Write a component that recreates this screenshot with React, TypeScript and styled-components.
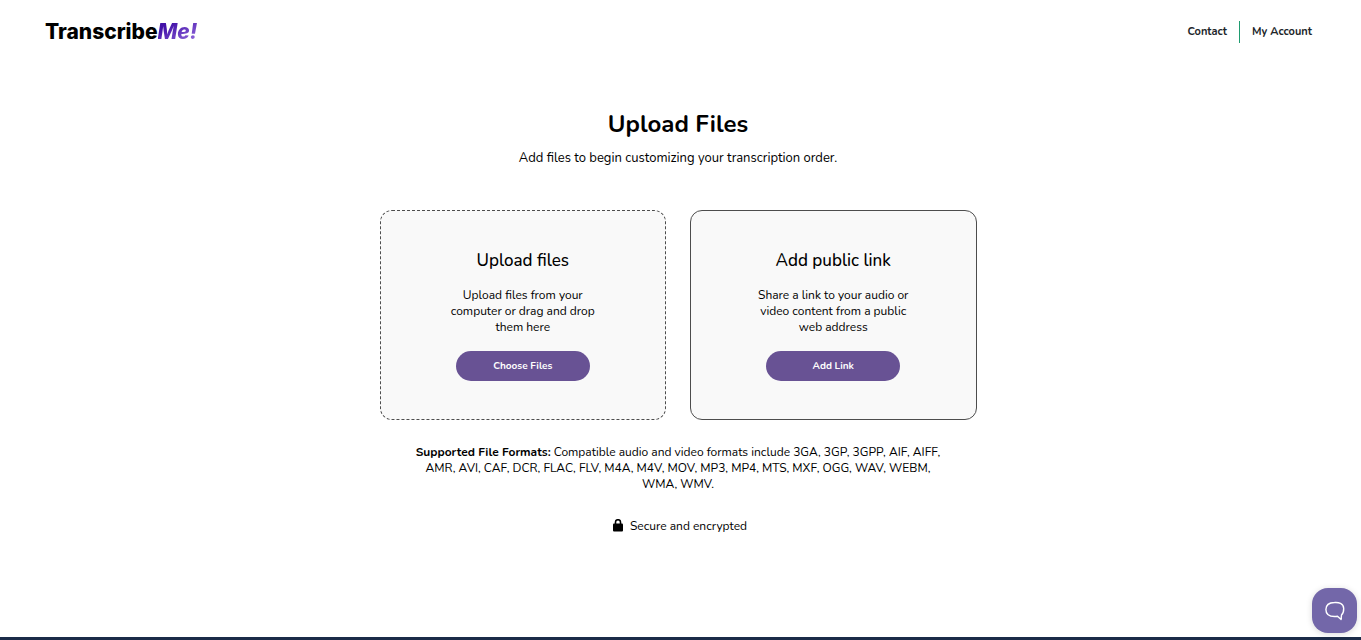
import React from 'react';
import styled, { createGlobalStyle } from 'styled-components';

const GlobalStyle = createGlobalStyle`
  *, *::before, *::after { box-sizing: border-box; }
  body {
    margin: 0;
    background: #fff;
    color: #000;
    font-family: Nunito, 'Noto Sans', sans-serif;
    font-size: 12px;
    line-height: 16px;
  }
  h1, h2, p { margin: 0; }
`;

const Page = styled.div`
  min-height: 100vh;
  display: flex;
  flex-direction: column;
`;

const Header = styled.header`
  height: 64px;
  padding: 0 49px 0 45px;
  display: flex;
  align-items: center;
  justify-content: space-between;
`;

const Logo = styled.a`
  font: 800 21px/28px Inter, sans-serif;
  color: #000;
  text-decoration: none;
`;

const LogoAccent = styled.span`
  font-style: italic;
  background: linear-gradient(150deg, #4312a8 25%, #8c62d8 85%);
  background-clip: text;
  color: transparent;
`;

const Nav = styled.nav`
  display: flex;
  align-items: center;
`;

const NavLink = styled.a`
  padding: 0 12px;
  font-size: 11px;
  line-height: 22px;
  font-weight: 700;
  color: #212529;
  text-decoration: none;
  & + & { border-left: 1px solid #1f9c70; padding-right: 0; }
`;

const Main = styled.main`
  flex: 1;
  padding: 44px 21px 40px 16px;
  display: flex;
  flex-direction: column;
  align-items: center;
  text-align: center;
`;

const Title = styled.h1`
  font-size: 24px;
  line-height: 32px;
  font-weight: 700;
`;

const Subtitle = styled.p`
  margin-top: 8px;
  font-size: 13px;
  line-height: 20px;
`;

const Cards = styled.div`
  width: 100%;
  max-width: 597px;
  margin-top: 42px;
  display: grid;
  grid-template-columns: 1fr 1fr;
  gap: 24px;
`;

const Card = styled.section<{ $dashed?: boolean }>`
  padding: 38px 64px;
  border: 1px ${p => (p.$dashed ? 'dashed' : 'solid')} #4d4d4d;
  border-radius: 12px;
  background: #f9f9f9;
  display: flex;
  flex-direction: column;
  align-items: center;
`;

const CardTitle = styled.h2`
  font-size: 17px;
  line-height: 24px;
  font-weight: 500;
`;

const CardText = styled.p`
  margin: 14px 0 16px;
`;

const PillButton = styled.button`
  width: 134px;
  height: 30px;
  border: 0;
  border-radius: 15px;
  background: #685294;
  color: #fff;
  font-family: inherit;
  font-size: 10px;
  font-weight: 700;
  cursor: pointer;
`;

const Formats = styled.p`
  max-width: 536px;
  margin-top: 24px;
`;

const Secure = styled.p`
  margin-top: 26px;
  padding-left: 4px;
  display: flex;
  align-items: center;
  gap: 7px;
`;

const Footer = styled.footer`
  height: 3px;
  background: #1b2b48;
`;

const ChatButton = styled.button`
  position: fixed;
  right: 4px;
  bottom: 7px;
  width: 45px;
  height: 45px;
  padding: 0;
  border: 0;
  border-radius: 16px;
  background: #7367a9;
  box-shadow: 0 1px 6px rgba(0, 0, 0, 0.15);
  display: flex;
  align-items: center;
  justify-content: center;
  cursor: pointer;
`;

export default function App() {
  return (
    <Page>
      <GlobalStyle />
      <Header>
        <Logo href="#">Transcribe<LogoAccent>Me!</LogoAccent></Logo>
        <Nav>
          <NavLink href="#contact">Contact</NavLink>
          <NavLink href="#account">My Account</NavLink>
        </Nav>
      </Header>
      <Main>
        <Title>Upload Files</Title>
        <Subtitle>Add files to begin customizing your transcription order.</Subtitle>
        <Cards>
          <Card $dashed>
            <CardTitle>Upload files</CardTitle>
            <CardText>Upload files from your<br />computer or drag and drop<br />them here</CardText>
            <PillButton type="button">Choose Files</PillButton>
          </Card>
          <Card>
            <CardTitle>Add public link</CardTitle>
            <CardText>Share a link to your audio or<br />video content from a public<br />web address</CardText>
            <PillButton type="button">Add Link</PillButton>
          </Card>
        </Cards>
        <Formats>
          <strong>Supported File Formats:</strong> Compatible audio and video formats include 3GA, 3GP, 3GPP, AIF, AIFF,
          AMR, AVI, CAF, DCR, FLAC, FLV, M4A, M4V, MOV, MP3, MP4, MTS, MXF, OGG, WAV, WEBM, WMA, WMV.
        </Formats>
        <Secure>
          <svg width="10" height="14" viewBox="0 0 10 14" aria-hidden="true">
            <path d="M2.500 6V3a2.500 2.300 0 0 1 5 0V6" fill="none" stroke="#000" strokeWidth="1.600" />
            <rect y="4.500" width="10" height="8" rx="1" />
          </svg>
          Secure and encrypted
        </Secure>
      </Main>
      <Footer />
      <ChatButton type="button" aria-label="Open chat">
        <svg width="20" height="20" viewBox="0 0 20 20" fill="none" stroke="#fff" strokeWidth="1.4" strokeLinejoin="round" aria-hidden="true">
          <path d="M9.500 1.500C13.500 1.200 18.500 2 18.700 7.500c.1 3-.6 5-2.200 6.500l-.4 4.500-3.600-3.300c-1 .2-2 .3-3 .3C4.500 15.500.9 13.500.9 8.500.9 3.500 4.500 1.700 9.500 1.500z" />
        </svg>
      </ChatButton>
    </Page>
  );
}
